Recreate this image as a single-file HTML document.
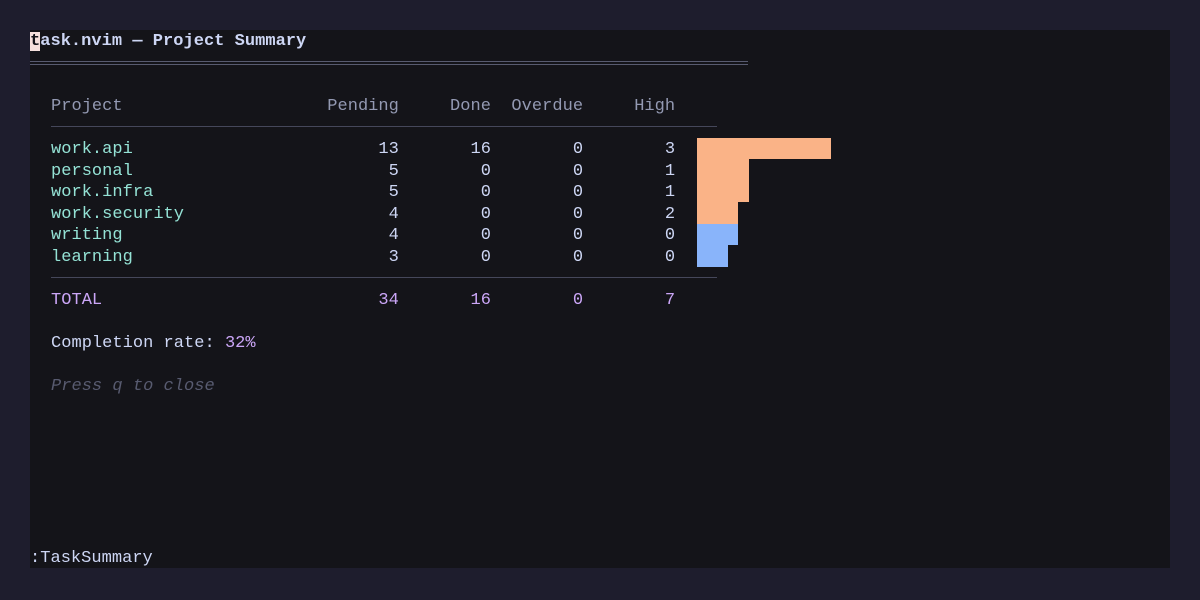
<!DOCTYPE html>
<html><head><meta charset="utf-8"><style>
html,body{margin:0;padding:0;width:1200px;height:600px;overflow:hidden;background:#1e1d2d;}
.term{position:absolute;left:30px;top:30px;width:1140px;height:538px;background:#141419;}
pre{margin:0;font-family:"Liberation Mono","DejaVu Sans Mono",monospace;font-size:17px;line-height:21.5px;position:absolute;white-space:pre;color:#cdd6f4;letter-spacing:0.03px;}
.h{color:#9399b2}.g{color:#94e2d5}.p{color:#cba6f7}.c{color:#585b70;font-style:italic}
.line{position:absolute;height:1px;background:#45475a;}
.bar{position:absolute;}
</style></head><body>
<div class="term"></div>
<pre style="left:30px;top:31px;font-weight:bold;color:#cdd6f4"><span style="background:#f5e0dc;color:#141419">t</span>ask.nvim — Project Summary</pre>
<div class="line" style="left:30px;top:61px;width:718px;background:#585b70"></div>
<div class="line" style="left:30px;top:64px;width:718px;background:#585b70"></div>
<pre style="left:51px;top:96px"><span class="h">Project                    Pending     Done  Overdue     High</span>

<span class="g">work.api                </span>        13       16        0        3
<span class="g">personal                </span>         5        0        0        1
<span class="g">work.infra              </span>         5        0        0        1
<span class="g">work.security           </span>         4        0        0        2
<span class="g">writing                 </span>         4        0        0        0
<span class="g">learning                </span>         3        0        0        0

<span class="p">TOTAL                           34       16        0        7</span>

Completion rate: <span class="p">32%</span>

<span class="c">Press q to close</span></pre>
<div class="line" style="left:51px;top:126px;width:666px"></div>
<div class="line" style="left:51px;top:277px;width:666px"></div>
<div class="bar" style="left:697px;top:138px;width:134px;height:21px;background:#fab387"></div>
<div class="bar" style="left:697px;top:159px;width:52px;height:43px;background:#fab387"></div>
<div class="bar" style="left:697px;top:202px;width:41px;height:22px;background:#fab387"></div>
<div class="bar" style="left:697px;top:224px;width:41px;height:21px;background:#89b4fa"></div>
<div class="bar" style="left:697px;top:245px;width:31px;height:22px;background:#89b4fa"></div>
<pre style="left:30px;top:548px;color:#cdd6f4">:TaskSummary</pre>
</body></html>
